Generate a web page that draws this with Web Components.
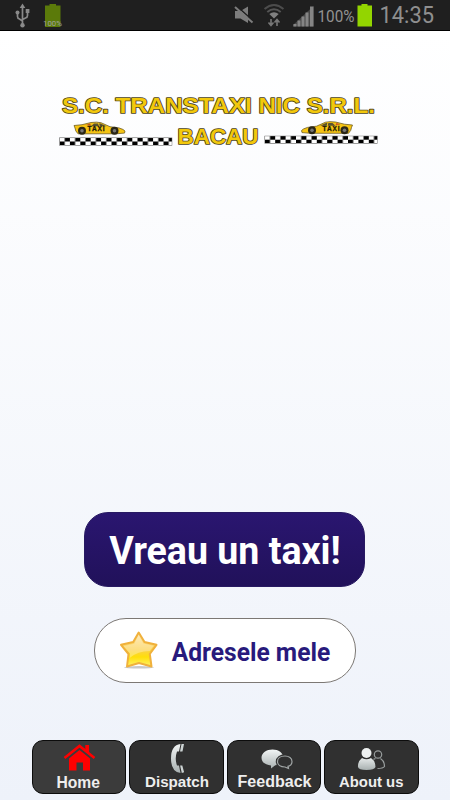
<!DOCTYPE html>
<html lang="ro">
<head>
<meta charset="utf-8">
<meta name="viewport" content="width=device-width, initial-scale=1">
<title>Transtaxi Nic Bacau</title>
<style>
  html, body {
    margin: 0;
    height: 100%;
    overflow: hidden;
  }
  body {
    font-family: Roboto, "Liberation Sans", sans-serif;
  }
</style>
</head>
<body>
<taxi-app></taxi-app>

<script>
  class StatusBar extends HTMLElement {
    constructor() {
      super();

      const shadow = this.attachShadow({ mode: "open" });
      shadow.innerHTML = `
        <style>
          :host {
            display: block;
            height: 31px;
            box-sizing: border-box;
            background: #1f1f1f;
            border-bottom: 1px solid #000;
          }
          svg {
            display: block;
          }
        </style>
        <svg width="450" height="30" viewBox="0 0 450 30" font-family="Roboto">
          <!-- usb -->
          <g stroke="#8a8a8a" stroke-width="1.7" fill="none">
            <path d="M22.5 7V25M17.5 13v3.500q0 2 2 2.500l3 2M27.500 12v3.500q0 2-2 2.500l-3 1.500"/>
          </g>
          <g fill="#8a8a8a">
            <path d="M22.500 3.500l2.800 4.500h-5.600z"/>
            <circle cx="22.500" cy="25.200" r="2.200"/>
            <circle cx="17.500" cy="12.500" r="2"/>
            <path d="M25.700 9h3.700v4h-3.700z"/>
          </g>
          <!-- battery notification -->
          <path d="M49.500 4h6.500v1.500h4.500v21.500h-15.500v-21.500h4.500z" fill="#5b7a0a"/>
          <text x="43" y="26.200" font-size="7" fill="#a0a0a0" textLength="19" lengthAdjust="spacingAndGlyphs">100%</text>
          <!-- muted speaker -->
          <path d="M235 11h5.500l7.500-4.500v16.500l-7.500-4.500h-5.500z" fill="#7d7d7d"/>
          <path d="M236.500 6l17 15" stroke="#1f1f1f" stroke-width="1.500"/>
          <path d="M235 7l17.500 15.500" stroke="#7d7d7d" stroke-width="2"/>
          <!-- wifi -->
          <g fill="none" stroke-width="2">
            <path d="M264.500 9q9.500-8 19 0" stroke="#4c4c4c"/>
            <path d="M267.300 12q6.700-5.500 13.400 0" stroke="#555"/>
          </g>
          <path d="M269.300 14q4.700-3.500 9.400 0l-4.700 4.500z" fill="#808080"/>
          <path d="M271 19v6M268.500 22.500l2.500 3 2.500-3M277 26v-6M274.500 22.500l2.500-3 2.500 3" fill="none" stroke="#777" stroke-width="1.600"/>
          <!-- signal -->
          <path d="M293.500 24h3v2.500h-3zM297.500 20.500h3v6h-3zM301.500 16.500h3v10h-3zM305.500 12.500h3v14h-3zM310 6.500h3.500v20h-3.500z" fill="#858585"/>
          <path d="M293 26.500v-1.500l20.500-19v20.500z" fill="#858585" opacity=".4"/>
          <text x="317.500" y="21.700" font-size="16" fill="#929292" textLength="37" lengthAdjust="spacingAndGlyphs">100%</text>
          <path d="M361.500 4h6v1.500h4.500v21h-14.500v-21h4z" fill="#93d500"/>
          <text x="379.500" y="23.300" font-size="23" fill="#8f8f8f" textLength="54.500" lengthAdjust="spacingAndGlyphs">14:35</text>
        </svg>`;
    }
  }

  class TaxiLogo extends HTMLElement {
    constructor() {
      super();

      const shadow = this.attachShadow({ mode: "open" });
      shadow.innerHTML = `
        <style>
          :host {
            display: block;
          }
          svg {
            display: block;
          }
        </style>
        <svg width="450" height="70" viewBox="0 85 450 70">
          <defs>
            <pattern id="check" width="10.400" height="7.400" patternUnits="userSpaceOnUse">
              <path d="M5.200 0h5.200v3.700h-5.200zM0 3.700h5.200v3.700h-5.200z" fill="#000"/>
            </pattern>
            <g id="car">
              <path d="M0 3l8-.8 9-2.200q6-.8 10 .2l9 4 9 1.200q5 1.500 6 3.200l-.5 2-8.500.7H4q-3-3-3-5.800z" fill="#f5c414" stroke="#5c4a12" stroke-width=".7"/>
              <path d="M20 1h6.500l6 2.800H17z" fill="#5a5230"/>
              <path d="M24.500 .5l1 4" stroke="#f5c414"/>
              <path d="M12 2.500l4-1.500 1 2z" fill="#c8492a"/>
              <circle cx="8" cy="8.300" r="4" fill="#2a2616"/>
              <circle cx="40.500" cy="8.300" r="4" fill="#2a2616"/>
              <circle cx="8" cy="8.300" r="1.800" fill="#777"/>
              <circle cx="40.500" cy="8.300" r="1.800" fill="#777"/>
            </g>
          </defs>
          <g font-family="Liberation Sans" font-weight="bold" font-size="22" fill="#f2c80c" stroke="#4a4220" stroke-width="1.700" stroke-linejoin="round">
            <text x="62" y="113.200" textLength="313" lengthAdjust="spacingAndGlyphs" paint-order="stroke">S.C. TRANSTAXI NIC S.R.L.</text>
            <text x="177.500" y="144.200" textLength="81" lengthAdjust="spacingAndGlyphs" paint-order="stroke">BACAU</text>
          </g>
          <g transform="translate(59.500 137.800)">
            <rect width="112.500" height="7.400" fill="#fff"/>
            <rect width="112.500" height="7.400" fill="url(#check)"/>
            <rect width="112.500" height="7.700" fill="none" stroke="#777" stroke-width=".5"/>
          </g>
          <g transform="translate(264.800 136)">
            <rect width="112.500" height="7.400" fill="#fff"/>
            <rect width="112.500" height="7.400" fill="url(#check)"/>
            <rect width="112.500" height="7.700" fill="none" stroke="#777" stroke-width=".5"/>
          </g>
          <use href="#car" transform="translate(74 122.500)"/>
          <use href="#car" transform="translate(352.500 122) scale(-1 1)"/>
          <g font-family="Liberation Sans" font-weight="bold" font-size="6.500" fill="#221b05" stroke="#221b05" stroke-width=".3">
            <text x="87.500" y="131.300" textLength="17">TAXI</text>
            <text x="322.500" y="130.800" textLength="17">TAXI</text>
          </g>
        </svg>`;
    }
  }

  // Big rounded button; "primary" is the dark one, otherwise white outline
  class ActionButton extends HTMLElement {
    constructor() {
      super();

      const shadow = this.attachShadow({ mode: "open" });
      shadow.innerHTML = `
        <style>
          :host {
            display: flex;
            box-sizing: border-box;
            width: 262px;
            height: 65px;
            border: 1px solid #7c7874;
            border-radius: 32px;
            background: #fff;
          }
          :host([primary]) {
            width: 281px;
            height: 75px;
            border-color: #281a62;
            border-radius: 24px;
            background: linear-gradient(#2a1670, #21115a);
          }
          ::slotted(svg) {
            display: block;
          }
        </style>
        <slot></slot>`;
    }
  }

  class TabButton extends HTMLElement {
    constructor() {
      super();

      const shadow = this.attachShadow({ mode: "open" });
      shadow.innerHTML = `
        <style>
          :host {
            display: block;
            box-sizing: border-box;
            width: 94.500px;
            height: 54.500px;
            border: 1px solid #0c0c0c;
            border-radius: 11px;
            background: #303030;
            overflow: hidden;
          }
          :host([active]) {
            background: #3b3b3b;
          }
          ::slotted(svg) {
            display: block;
            margin: -1px;
          }
        </style>
        <slot></slot>`;
    }
  }

  class TaxiApp extends HTMLElement {
    constructor() {
      super();

      const shadow = this.attachShadow({ mode: "open" });
      shadow.innerHTML = `
        <style>
          :host {
            display: flex;
            flex-direction: column;
            width: 450px;
            height: 800px;
            background: linear-gradient(#fff 31px, #eef2fa);
          }
          main {
            flex: 1;
            display: flex;
            flex-direction: column;
            align-items: center;
            padding-top: 54px;
          }
          .actions {
            display: flex;
            flex-direction: column;
            align-items: center;
            gap: 31px;
            margin-top: 356.500px;
            padding-right: .500px;
          }
          nav {
            display: flex;
            gap: 3px;
            padding: 0 0 6px 31.800px;
          }
        </style>
        <status-bar></status-bar>
        <main>
          <taxi-logo></taxi-logo>
          <div class="actions">
            <action-button primary>
              <svg width="279" height="73" viewBox="85 513 279 73">
                <text x="109.200" y="564" font-family="Roboto" font-weight="bold" font-size="38" fill="#fff" textLength="231.500" lengthAdjust="spacingAndGlyphs">Vreau un taxi!</text>
              </svg>
            </action-button>
            <action-button>
              <svg width="260" height="63" viewBox="95 619 260 63">
                <defs>
                  <linearGradient id="star" x2="0" y2="1">
                    <stop offset="0" stop-color="#fde3a8"/>
                    <stop offset=".5" stop-color="#fbd04c"/>
                    <stop offset=".72" stop-color="#ffdf0a"/>
                    <stop offset="1" stop-color="#fff36b"/>
                  </linearGradient>
                </defs>
                <ellipse cx="139" cy="667.300" rx="15" ry="1.200" fill="#c9c9c9"/>
                <path d="M138.700 632.500l5.800 9.500 12 2.800-6.700 9.200 1.700 12.500-12.500-3.500-12 3.500 1.500-12.500-7.500-9.200 12.200-2.800z" fill="url(#star)" stroke="#f0b13c" stroke-width="2" stroke-linejoin="round"/>
                <path d="M138.700 635l4.700 8.500 10.300 2.300-4 5.200q-12 0-20 7l.3-4.500-6.500-7.500 10.700-2.300z" fill="#fff" opacity=".3"/>
                <text x="171.700" y="660.500" font-family="Roboto" font-weight="bold" font-size="25" fill="#281a7c" textLength="158.500" lengthAdjust="spacingAndGlyphs">Adresele mele</text>
              </svg>
            </action-button>
          </div>
        </main>
        <nav>
          <tab-button active>
            <svg width="95" height="55" viewBox="32 739.500 95 55">
              <path d="M64.500 757.500l15-12 15 12" fill="none" stroke="#f00" stroke-width="2.600"/>
              <path d="M85.300 744.500h3.800v8l-3.800-3zM79.500 749.500l10.500 8.500v12h-7v-8h-6.500v8h-7.500v-12z" fill="#f00"/>
              <text x="56.500" y="787" font-family="Liberation Sans" font-weight="bold" font-size="16" fill="#eee" textLength="43.500" lengthAdjust="spacingAndGlyphs">Home</text>
            </svg>
          </tab-button>
          <tab-button>
            <svg width="95" height="55" viewBox="129.500 739.500 95 55">
              <linearGradient id="phone" x2="0" y2="1">
                <stop offset="0" stop-color="#f2f5f5"/>
                <stop offset="1" stop-color="#a8b0b0"/>
              </linearGradient>
              <path d="M181 743.500q-9.500 1-9.500 14.500t9.500 14.500l-1.500-7.500h-2q-2.500-7 0-14h2z" fill="url(#phone)"/>
              <path d="M182 743.500h2.500l-1.500 7.500h-2.500zM180.600 765h2.200l1.800 6.800-2.300.8z" fill="#ccd3d3"/>
              <text x="145.500" y="786.500" font-family="Liberation Sans" font-weight="bold" font-size="15.500" fill="#eee" textLength="64" lengthAdjust="spacingAndGlyphs">Dispatch</text>
            </svg>
          </tab-button>
          <tab-button>
            <svg width="95" height="55" viewBox="227 739.500 95 55">
              <linearGradient id="bubble" x2="0" y2="1">
                <stop offset="0" stop-color="#f2f5f5"/>
                <stop offset="1" stop-color="#a8b0b0"/>
              </linearGradient>
              <path d="M272.500 749c6 0 10.800 3.400 10.800 8.200 0 4.500-4 7.200-8 7.600l-4.300 3.200v-3c-5.500-.5-9.500-3.300-9.500-7.800 0-4.800 5-8.200 11-8.200z" fill="url(#bubble)"/>
              <path d="M285 755.500c4 0 7 2.300 7 5.500 0 2.500-1.500 4.200-4 4.800l.5 2.200-3.500-1.500c-4.500 0-7.500-2.300-7.500-5.500s3-5.500 7.500-5.500z" fill="#303030" stroke="#303030" stroke-width="3.500"/>
              <path d="M285 755.500c4 0 7 2.300 7 5.500 0 2.500-1.500 4.200-4 4.800l.5 2.200-3.500-1.500c-4.500 0-7.500-2.300-7.500-5.500s3-5.500 7.500-5.500z" fill="#303030" stroke="#a0a5a5" stroke-width="1.200"/>
              <text x="237.500" y="786" font-family="Liberation Sans" font-weight="bold" font-size="16" fill="#eee" textLength="74" lengthAdjust="spacingAndGlyphs">Feedback</text>
            </svg>
          </tab-button>
          <tab-button>
            <svg width="95" height="55" viewBox="324.500 739.500 95 55">
              <linearGradient id="person" x2="0" y2="1">
                <stop offset="0" stop-color="#e6eaea"/>
                <stop offset="1" stop-color="#a8b0b0"/>
              </linearGradient>
              <circle cx="367" cy="752.500" r="5" fill="#eef1f1"/>
              <path d="M362.500 757.500q4.500 2.500 9 0 4.500 3 4.500 9-1 3-9 3t-8.500-3q-.5-5.500 4-9z" fill="url(#person)"/>
              <circle cx="378.500" cy="754" r="3.700" fill="none" stroke="#979c9c" stroke-width="1.200"/>
              <path d="M376 758q-1.500.5-2 1M381 758q4 2.500 4 8-1.500 2-7 2" fill="none" stroke="#979c9c" stroke-width="1.200"/>
              <text x="339.500" y="786" font-family="Liberation Sans" font-weight="bold" font-size="15.500" fill="#eee" textLength="64.500" lengthAdjust="spacingAndGlyphs">About us</text>
            </svg>
          </tab-button>
        </nav>`;
    }
  }

  customElements.define("status-bar", StatusBar);
  customElements.define("taxi-logo", TaxiLogo);
  customElements.define("action-button", ActionButton);
  customElements.define("tab-button", TabButton);
  customElements.define("taxi-app", TaxiApp);
</script>
</body>
</html>
